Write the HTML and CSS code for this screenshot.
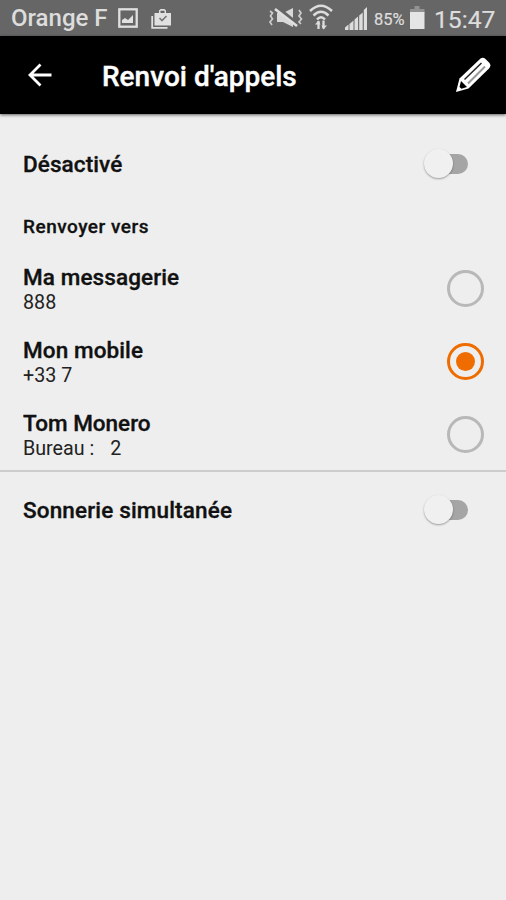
FILE: index.html
```html
<!DOCTYPE html>
<html lang="fr">
<head>
<meta charset="utf-8">
<title>Renvoi d'appels</title>
<link rel="stylesheet" href="styles.css">
</head>
<body>
<div class="status">
  <span class="carrier">Orange F</span>
  <svg class="icon-image" width="20" height="20" viewBox="0 0 20 20"><rect x="1.3" y="1.3" width="17.4" height="17.4" fill="none" stroke="#e0e0e0" stroke-width="2.3"/><path d="M4 15V12l3-2 3 2 5-5v8z" fill="#e0e0e0"/></svg>
  <svg class="icon-bag" width="21" height="20" viewBox="0 0 21 20"><path d="M1.2 7v11.8h15.3" fill="none" stroke="#e0e0e0" stroke-width="1.8"/><path d="M3.500 4H8V1.5L9.500 0h4L15 1.500V4h5v12.500H3.500zM9.500 4h4V1.700h-4z" fill="#e0e0e0" fill-rule="evenodd"/><path d="M8.500 9l2.500 2.500 4.500-4.500" fill="none" stroke="#777" stroke-width="1.600"/></svg>
  <svg class="icon-mute" width="34" height="22" viewBox="0 0 34 22"><path d="M8 6h6l10-5v19l-10-5H8z" fill="#d8d8d8"/><path d="M8 1l20 16" stroke="#666" stroke-width="4.500"/><path d="M6 2l22 17" stroke="#e0e0e0" stroke-width="2.600"/><path d="M1 4l2.500 2L1.500 9 3.500 12 1 15l2 3M30 3l2 3-2 3 2.500 3-2.500 3 2 2" fill="none" stroke="#ccc" stroke-width="1.700"/></svg>
  <svg class="icon-wifi" width="24" height="27" viewBox="0 0 24 27"><g fill="none" stroke="#ddd" stroke-width="2.500"><path d="M1 7Q12-3.500 23 7M4.500 11.500Q12 4 19.500 11.500M8 15.500Q12 11 16 15.500"/><path d="M9.500 17v8M14.500 16.500v8" stroke-width="2.300"/></g><path d="M6 20.500L9.500 16.500l2 4zM12.500 21.500H18l-3.500 4z" fill="#ddd"/></svg>
  <svg class="icon-signal" width="24" height="23" viewBox="0 0 24 23"><path d="M1 23v-2.500l3.500-3V23zM5.500 23v-6l4-3.500V23zM10.500 23V12.500l3.600-3V23zM15.200 23V8.500l3.500-3V23zM19.800 23V3L23 0v23z" fill="#ddd"/></svg>
  <span class="percent">85%</span>
  <svg class="icon-battery" width="15" height="23" viewBox="0 0 15 23"><path d="M4.500 0h5v3h5v4H0V3h4.500z" fill="#929292"/><path d="M0 6h14.500v17H0z" fill="#e5e5e5"/></svg>
  <span class="clock">15:47</span>
</div>
<header class="appbar">
  <svg class="back" width="24" height="24" viewBox="0 0 24 24"><path d="M12.500 1.500L2 12l10.500 10.500M2.500 12H23.500" fill="none" stroke="#fff" stroke-width="2.800"/></svg>
  <h1>Renvoi d'appels</h1>
  <svg class="edit" width="36" height="36" viewBox="0 0 36 36"><path d="M1 35L4.500 21.500 25.500 1.500Q28-.2 30.500 2L34.500 6q2 2.800-.5 5.500L13.500 31.500z" fill="#fff"/><path d="M6 24L12 30l-5.500 1.700L4.500 30z" fill="#000"/><path d="M9.500 22.500L26.500 6" fill="none" stroke="#222" stroke-width="1.500"/><path d="M13 26.500L30 9.500" fill="none" stroke="#999" stroke-width="2"/></svg>
</header>
<main>
  <div class="row toggle-row">
    <span class="title disabled">Désactivé</span>
    <span class="switch"><i></i></span>
  </div>
  <h2>Renvoyer vers</h2>
  <div class="row choice">
    <div><div class="title voicemail">Ma messagerie</div><div class="detail">888</div></div>
    <span class="radio"></span>
  </div>
  <div class="row choice">
    <div><div class="title mobile">Mon mobile</div><div class="detail">+33 7</div></div>
    <span class="radio selected"></span>
  </div>
  <div class="row choice">
    <div><div class="title contact">Tom Monero</div><div class="detail office"><span>Bureau :</span><span>2</span></div></div>
    <span class="radio"></span>
  </div>
  <div class="divider"></div>
  <div class="row toggle-row last">
    <span class="title ring">Sonnerie simultanée</span>
    <span class="switch"><i></i></span>
  </div>
</main>
</body>
</html>
```
FILE: styles.css
```css
* { box-sizing: border-box; }
body {
  margin: 0;
  min-height: 900px;
  background: #eee;
  color: #111;
  font-family: Roboto, "Liberation Sans", sans-serif;
}
svg { display: block; flex: none; }
.status {
  display: flex;
  align-items: flex-start;
  height: 36px;
  padding-left: 11px;
  background: #666;
  color: #ddd;
  white-space: nowrap;
}
.carrier { width: 107px; font-size: 24px; line-height: 36px; font-weight: 500; }
.icon-image { margin-top: 8px; }
.icon-bag { margin: 9px 0 0 13px; }
.icon-mute { margin: 7px 0 0 97px; }
.icon-wifi { margin: 4px 0 0 6px; }
.icon-signal { margin: 7px 0 0 11px; }
.percent { width: 36px; margin-left: 6px; font-size: 16.500px; line-height: 39px; -webkit-text-stroke: .2px; }
.icon-battery { margin-top: 6px; }
.clock { margin-left: 9px; font-size: 24.700px; line-height: 39px; -webkit-text-stroke: .2px; }
.appbar {
  display: flex;
  align-items: center;
  height: 78px;
  padding: 0 15px 0 28px;
  background: #000;
  color: #fff;
  box-shadow: 0 1px 3px rgba(0, 0, 0, .6);
}
h1 { margin: 3px 0 0 50px; font-size: 28px; line-height: 36px; font-weight: 500; -webkit-text-stroke: .4px; }
.edit { margin-left: auto; }
main { padding-top: 14px; }
.row { display: flex; align-items: center; justify-content: space-between; }
.toggle-row { height: 72px; padding: 0 38px 0 23px; }
.title { font-size: 22.500px; line-height: 26px; font-weight: 500; letter-spacing: .1px; -webkit-text-stroke: .35px; }
h2 { margin: 0 0 0 23px; padding-top: 14px; height: 52px; font-size: 19px; line-height: 26px; font-weight: 500; letter-spacing: .5px; -webkit-text-stroke: .3px; }
.choice { height: 73px; padding: 0 22px 0 23px; }
.choice > div { padding-top: 2px; }
.ring { letter-spacing: .15px; }
.contact { letter-spacing: 0; }
.detail { padding-top: 1px; font-size: 19.700px; line-height: 24px; color: #222; }
.office { display: flex; gap: 16px; }
.switch {
  position: relative;
  width: 34px;
  height: 20px;
  border-radius: 10px;
  background: #a5a5a5;
}
.switch i {
  position: absolute;
  left: -10px;
  top: -5px;
  width: 29px;
  height: 29px;
  border-radius: 50%;
  background: #f0f0f0;
  box-shadow: 0 1px 2px rgba(0, 0, 0, .35);
}
.radio {
  display: grid;
  place-items: center;
  width: 37px;
  height: 37px;
  border: 3px solid #b8b8b8;
  border-radius: 50%;
}
.selected { border-color: #ef6c00; }
.selected::after { content: ""; width: 19px; height: 19px; border-radius: 50%; background: #ef6c00; }
.divider { height: 2px; margin-top: -1px; background: #ccc; }
.last { height: 76px; }
```
